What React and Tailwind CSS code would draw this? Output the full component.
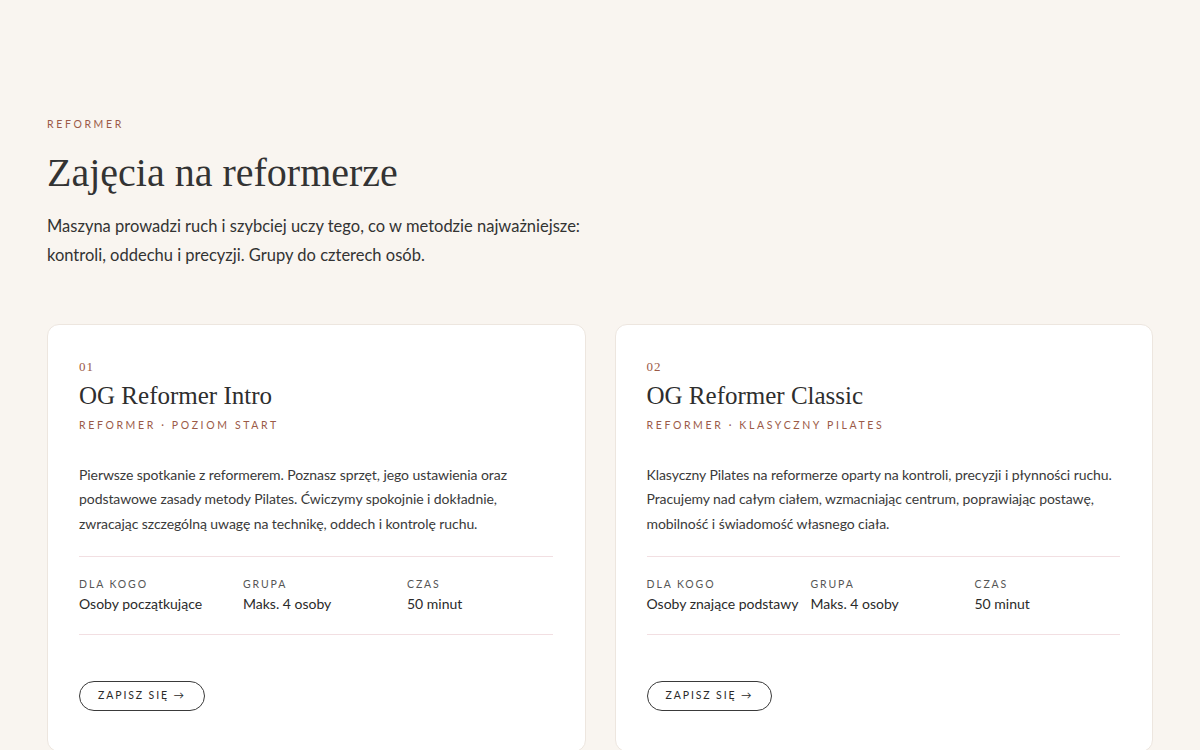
import React from 'react';

const CLASSES = [
  {
    num: '01',
    title: 'OG Reformer Intro',
    tag: 'Reformer · Poziom start',
    desc: 'Pierwsze spotkanie z reformerem. Poznasz sprzęt, jego ustawienia oraz podstawowe zasady metody Pilates. Ćwiczymy spokojnie i dokładnie, zwracając szczególną uwagę na technikę, oddech i kontrolę ruchu.',
    who: 'Osoby początkujące',
  },
  {
    num: '02',
    title: 'OG Reformer Classic',
    tag: 'Reformer · Klasyczny Pilates',
    desc: 'Klasyczny Pilates na reformerze oparty na kontroli, precyzji i płynności ruchu. Pracujemy nad całym ciałem, wzmacniając centrum, poprawiając postawę, mobilność i świadomość własnego ciała.',
    who: 'Osoby znające podstawy',
  },
];

const serif = { fontFamily: '"Liberation Serif", "DejaVu Serif", serif' };

function Card({ c }) {
  return (
    <div className="bg-white border border-[#ede6df] rounded-xl pl-[31px] pr-8 pt-[34px] pb-10">
      <p className="text-[13px] text-[#9b5a47] tracking-[0.08em] leading-4" style={serif}>{c.num}</p>
      <h3 className="mt-[5px] text-[25px] leading-8 text-[#2e2e2e]" style={serif}>{c.title}</h3>
      <p className="mt-[6px] text-[10.5px] uppercase tracking-[0.25em] text-[#9b5a47]">{c.tag}</p>
      <p className="mt-[29px] text-[14px] leading-[24.5px] text-[#3a3a3a] tracking-[-0.005em]">{c.desc}</p>
      <div className="mt-[20px] border-t border-b border-[#f2dfe2] pt-[19px] pb-[20px] grid grid-cols-[164px_164px_1fr]">
        {[['Dla kogo', c.who], ['Grupa', 'Maks. 4 osoby'], ['Czas', '50 minut']].map(([k, v]) => (
          <div key={k}>
            <p className="text-[10.5px] uppercase tracking-[0.18em] text-[#555] leading-4">{k}</p>
            <p className="mt-[2px] text-[14px] text-[#2a2a2a] leading-5">{v}</p>
          </div>
        ))}
      </div>
      <button className="mt-[46px] h-[30px] px-[18px] rounded-full border border-[#3a3a3a] text-[10.5px] uppercase tracking-[0.18em] text-[#2a2a2a]">
        Zapisz się →
      </button>
    </div>
  );
}

export default function App() {
  return (
    <div className="min-h-screen bg-[#f9f5f0] text-[#2a2a2a]" style={{ fontFamily: 'Lato, "Open Sans", sans-serif' }}>
      <div className="px-[47px] pt-[116px]">
        <p className="text-[10.5px] uppercase tracking-[0.25em] text-[#9b5a47] leading-4">Reformer</p>
        <h1 className="mt-[17px] text-[40px] leading-[48px] text-[#333]" style={serif}>Zajęcia na reformerze</h1>
        <p className="mt-[15px] text-[16.5px] leading-[29px] text-[#333] max-w-[560px]">
          Maszyna prowadzi ruch i szybciej uczy tego, co w metodzie najważniejsze: kontroli, oddechu i precyzji. Grupy do czterech osób.
        </p>
        <div className="mt-[54px] grid grid-cols-2 gap-[29px] w-[1106px]">
          {CLASSES.map((c) => <Card key={c.num} c={c} />)}
        </div>
      </div>
    </div>
  );
}
